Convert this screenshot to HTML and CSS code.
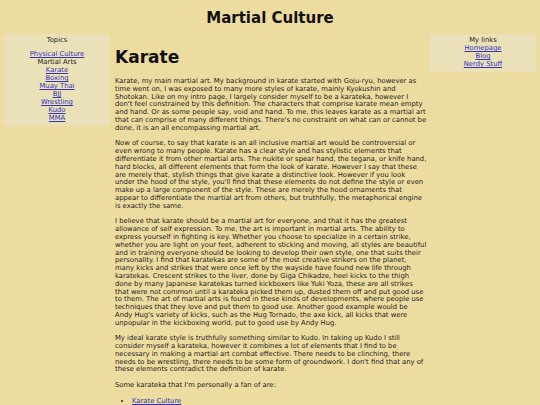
FILE: index.html
```html
<!DOCTYPE html>
<html>
<head>
<meta charset="utf-8">
<link rel="stylesheet" href="styles.css">
</head>
<body>
<h1 class="site-title">Martial Culture</h1>
<div class="layout">
  <nav class="side side-left">
    <div class="side-head">Topics</div>
    <div class="side-gap"></div>
    <a href="#">Physical Culture</a>
    <span>Martial Arts</span>
    <a href="#">Karate</a>
    <a href="#">Boxing</a>
    <a href="#">Muay Thai</a>
    <a href="#">BJJ</a>
    <a href="#">Wrestling</a>
    <a href="#">Kudo</a>
    <a href="#">MMA</a>
  </nav>
  <main class="content">
    <h2 class="page-title">Karate</h2>
    <p>Karate, my main martial art. My background in karate started with Goju-ryu, however as time went on, I was exposed to many more styles of karate, mainly Kyokushin and Shotokan. Like on my intro page, I largely consider myself to be a karateka, however I don't feel constrained by this definition. The characters that comprise karate mean empty and hand. Or as some people say, void and hand. To me, this leaves karate as a martial art that can comprise of many different things. There's no constraint on what can or cannot be done, it is an all encompassing martial art.</p>
    <p>Now of course, to say that karate is an all inclusive martial art would be controversial or even wrong to many people. Karate has a clear style and has stylistic elements that differentiate it from other martial arts. The nukite or spear hand, the tegana, or knife hand, hard blocks, all different elements that form the look of karate. However I say that these are merely that, stylish things that give karate a distinctive look. However if you look under the hood of the style, you'll find that these elements do not define the style or even make up a large component of the style. These are merely the hood ornaments that appear to differentiate the martial art from others, but truthfully, the metaphorical engine is exactly the same.</p>
    <p>I believe that karate should be a martial art for everyone, and that it has the greatest allowance of self expression. To me, the art is important in martial arts. The ability to express yourself in fighting is key. Whether you choose to specialize in a certain strike, whether you are light on your feet, adherent to sticking and moving, all styles are beautiful and in training everyone should be looking to develop their own style, one that suits their personality. I find that karatekas are some of the most creative strikers on the planet, many kicks and strikes that were once left by the wayside have found new life through karatekas. Crescent strikes to the liver, done by Giga Chikadze, heel kicks to the thigh done by many Japanese karatekas turned kickboxers like Yuki Yoza, these are all strikes that were not common until a karateka picked them up, dusted them off and put good use to them. The art of martial arts is found in these kinds of developments, where people use techniques that they love and put them to good use. Another good example would be Andy Hug's variety of kicks, such as the Hug Tornado, the axe kick, all kicks that were unpopular in the kickboxing world, put to good use by Andy Hug.</p>
    <p>My ideal karate style is truthfully something similar to Kudo. In taking up Kudo I still consider myself a karateka, however it combines a lot of elements that I find to be necessary in making a martial art combat effective. There needs to be clinching, there needs to be wrestling, there needs to be some form of groundwork. I don't find that any of these elements contradict the definition of karate.</p>
    <p>Some karateka that I'm personally a fan of are:</p>
    <ul class="fans">
      <li><a href="#">Karate Culture</a></li>
    </ul>
  </main>
  <nav class="side side-right">
    <div class="side-head">My links</div>
    <a href="#">Homepage</a>
    <a href="#">Blog</a>
    <a href="#">Nerdy Stuff</a>
  </nav>
</div>
</body>
</html>
```
FILE: styles.css
```css
html, body {
  margin: 0;
  padding: 0;
}
body {
  background: #eddc9f;
  color: #222;
  font-family: "DejaVu Sans", Verdana, sans-serif;
  font-size: 6.8px;
  line-height: 8px;
  padding: 0 4px;
}
.site-title {
  margin: 0;
  padding-top: 10px;
  height: 24px;
  box-sizing: border-box;
  text-align: center;
  font-size: 15px;
  line-height: 16px;
  font-weight: bold;
  color: #111;
}
.layout {
  display: flex;
  align-items: flex-start;
  margin-top: 10px;
}
.side {
  width: 106px;
  flex: none;
  background: #ebe1b9;
  display: flex;
  flex-direction: column;
  align-items: center;
  padding: 2px 0 4px;
  box-sizing: border-box;
}
.side-gap {
  height: 6px;
}
.side a {
  color: #3333bb;
}
.side span {
  color: #222;
}
.content {
  flex: 1;
  min-width: 0;
  margin: 0 3.5px 0 5px;
  line-height: 7.8px;
}
.page-title {
  margin: 13px 0 11px;
  font-size: 17px;
  line-height: 20px;
  font-weight: bold;
  color: #111;
}
.content p {
  margin: 0 0 7.8px;
}
.fans {
  margin: 0;
  padding-left: 17px;
}
.fans a {
  color: #3333bb;
}
```
